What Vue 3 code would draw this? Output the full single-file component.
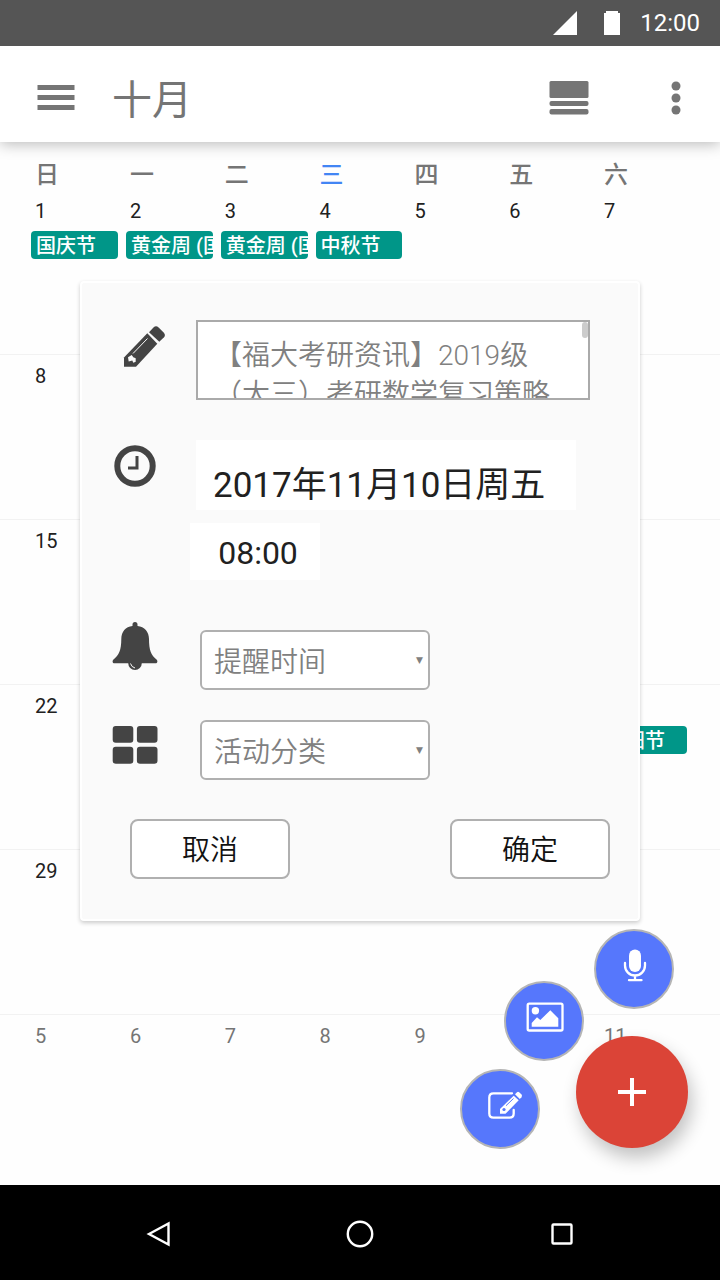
<script setup>
import { ref } from 'vue'

const weekdays = ['日', '一', '二', '三', '四', '五', '六']

const weeks = [
  [
    { day: 1, event: '国庆节' },
    { day: 2, event: '黄金周 (国' },
    { day: 3, event: '黄金周 (国' },
    { day: 4, event: '中秋节' },
    { day: 5 },
    { day: 6 },
    { day: 7 },
  ],
  [{ day: 8 }, {}, {}, {}, {}, {}, {}],
  [{ day: 15 }, {}, {}, {}, {}, {}, {}],
  [{ day: 22 }, {}, {}, {}, {}, {}, { event: '重阳节' }],
  [{ day: 29 }, {}, {}, {}, {}, {}, {}],
  [
    { day: 5, next: true },
    { day: 6, next: true },
    { day: 7, next: true },
    { day: 8, next: true },
    { day: 9, next: true },
    {},
    { day: 11, next: true },
  ],
]

const title = ref('【福大考研资讯】2019级\n（大三）考研数学复习策略')
</script>

<template>
  <div class="screen">
    <div class="status">
      <svg class="signal" viewBox="0 0 24 24" aria-hidden="true"><path d="M0 24H24V0Z" /></svg>
      <svg class="battery" viewBox="0 0 16 24" aria-hidden="true"><path d="M2 0H14V2H16V24H0V2H2Z" /></svg>
      <span class="time">12:00</span>
    </div>

    <header class="appbar">
      <button class="icon-btn" type="button" aria-label="菜单">
        <svg width="38" height="36" viewBox="0 0 38 36">
          <path d="M0.500 5H37.500V10H0.500ZM0.500 15H37.500V20H0.500ZM0.500 25H37.500V30H0.500Z" />
        </svg>
      </button>
      <h1>十月</h1>
      <button class="icon-btn view" type="button" aria-label="视图">
        <svg width="40" height="36" viewBox="0 0 40 36">
          <rect x="0.500" y="1" width="39" height="17" rx="1.500" />
          <rect x="0.500" y="21" width="39" height="5" rx="2" />
          <rect x="0.500" y="29" width="39" height="5.500" rx="2" />
        </svg>
      </button>
      <button class="icon-btn" type="button" aria-label="更多">
        <svg width="10" height="36" viewBox="0 0 10 36">
          <circle cx="5" cy="6" r="4.500" />
          <circle cx="5" cy="18" r="4.500" />
          <circle cx="5" cy="30" r="4.500" />
        </svg>
      </button>
    </header>

    <main class="content">
      <table class="month">
        <colgroup>
          <col class="first" />
          <col span="5" />
          <col class="last" />
        </colgroup>
        <thead>
          <tr>
            <th v-for="(d, i) in weekdays" :key="d" scope="col" :class="{ today: i === 3 }">{{ d }}</th>
          </tr>
        </thead>
        <tbody>
          <tr v-for="(week, w) in weeks" :key="w">
            <td v-for="(c, i) in week" :key="i">
              <div class="day" :class="{ next: c.next }">{{ c.day }}</div>
              <div v-if="c.event" class="event">{{ c.event }}</div>
            </td>
          </tr>
        </tbody>
      </table>

      <form class="dialog" @submit.prevent>
        <div class="row">
          <svg class="ico" viewBox="0 0 60 60" aria-hidden="true">
            <path d="M19 37.500L42.300 13.300L52.300 23.700L31 46.700H19Z" />
            <path d="M44 12.300L48.500 7.500Q51 5 53.600 7.400L58.600 12.400Q61 15 59 17.200L54.300 21.700Z" />
            <path class="hole" d="M23 37.300L26.700 35L28.300 37.300L30.700 38.300V41.700L28.300 42.700L27.300 40.500L23.700 41.500Z" />
            <path class="shine" d="M28 33.500L42.500 18.500" />
          </svg>
          <div class="title-box">
            <textarea v-model="title" aria-label="标题"></textarea>
            <span class="thumb"></span>
          </div>
        </div>

        <div class="row when">
          <svg class="ico" viewBox="0 0 60 60" aria-hidden="true">
            <circle class="ring" cx="30" cy="26" r="17.700" />
            <path class="hands" d="M32 16V28H23" />
          </svg>
          <div class="when-fields">
            <button class="date" type="button">2017年11月10日周五</button>
            <button class="clock" type="button">08:00</button>
          </div>
        </div>

        <div class="row remind">
          <svg class="ico" viewBox="0 0 60 60" aria-hidden="true">
            <path d="M27.500 -4V-5.500Q27.500 -8 30 -8T32.500 -5.500V-4C39.500 -3.500 44 2 44 9C44 20 46 25 51.500 29.500C53 31 52.500 33.300 50.500 33.300H9.500C7.500 33.300 7 31 8.500 29.500C14 25 16.300 20 16.300 9C16.300 2 20.500 -3.500 27.500 -4Z" />
            <path d="M23.200 33A6.800 7 0 0 0 36.800 33Z" />
            <path class="shine" d="M25.500 33.500Q26.500 37.200 30 38" />
          </svg>
          <div class="pick">
            <select aria-label="提醒时间"><option>提醒时间</option></select>
            <span class="arrow" aria-hidden="true">▼</span>
          </div>
        </div>

        <div class="row kind">
          <svg class="ico" viewBox="0 0 60 60" aria-hidden="true">
            <rect x="7.700" y="6" width="20.600" height="16.800" rx="3" />
            <rect x="31.900" y="6" width="20.600" height="16.800" rx="3" />
            <rect x="7.700" y="26.700" width="20.600" height="17" rx="3" />
            <rect x="31.900" y="26.700" width="20.600" height="17" rx="3" />
          </svg>
          <div class="pick">
            <select aria-label="活动分类"><option>活动分类</option></select>
            <span class="arrow" aria-hidden="true">▼</span>
          </div>
        </div>

        <div class="actions">
          <button type="button">取消</button>
          <button type="submit">确定</button>
        </div>
      </form>

      <button class="mini mic" type="button" aria-label="语音">
        <svg viewBox="2 2 76 76">
          <rect x="35" y="20.500" width="12" height="22.500" rx="6" />
          <path class="line" d="M31 34V36.500A10 10 0 0 0 51 36.500V34M41 46.500V51M35 51.200H47.500" />
        </svg>
      </button>
      <button class="mini photo" type="button" aria-label="图片">
        <svg viewBox="2 2 76 76">
          <rect class="line" x="23.700" y="22.700" width="34.800" height="26.800" rx="1.500" />
          <circle cx="31.400" cy="29.700" r="3.700" />
          <path d="M27.700 45.700V42L33 36.300L36.300 39L46.300 29.300L54.300 37.300V45.700Z" />
        </svg>
      </button>
      <button class="mini edit" type="button" aria-label="编辑">
        <svg viewBox="2 2 76 76">
          <path class="line" d="M52 24.300H33.500Q29.300 24.300 29.300 28.500V44.500Q29.300 48.700 33.500 48.700H49.500Q53.700 48.700 53.700 44.500V41" />
          <path d="M40 40L53.700 26.700L58.700 31.300L45.500 44.800H40Z" />
          <path d="M55 25.300L57 23.300Q58 22.300 59.200 23.300L61.500 25.600Q62.600 27 61.500 28.200L59.800 30Z" />
          <path class="cut" d="M46 36.700L53.500 29.500" />
          <circle class="dot" cx="44" cy="40.500" r="1.600" />
        </svg>
      </button>
      <button class="fab" type="button" aria-label="新建">
        <svg width="28" height="28" viewBox="0 0 28 28"><path d="M12 0H16V12H28V16H16V28H12V16H0V12H12Z" /></svg>
      </button>
    </main>

    <nav class="softkeys" aria-label="系统导航">
      <button type="button" aria-label="返回">
        <svg viewBox="0 0 48 48"><path d="M15 24L34.500 13.500V34.500Z" /></svg>
      </button>
      <button type="button" aria-label="主屏幕">
        <svg viewBox="0 0 48 48"><circle cx="24" cy="24" r="12.200" /></svg>
      </button>
      <button type="button" aria-label="最近任务">
        <svg viewBox="0 0 48 48"><rect x="14.500" y="14.500" width="19" height="19" rx="1" /></svg>
      </button>
    </nav>
  </div>
</template>

<style>
body {
  margin: 0;
}
</style>

<style scoped>
.screen {
  display: flex;
  flex-direction: column;
  min-height: 100vh;
  background: #fefefe;
  color: #212121;
  font-family: Roboto, "Noto Sans CJK SC", sans-serif;
}
.screen * {
  box-sizing: border-box;
}
button,
select,
textarea {
  margin: 0;
  padding: 0;
  border: 0;
  background: none;
  color: inherit;
  font: inherit;
}
svg {
  display: block;
}

.status {
  position: relative;
  z-index: 2;
  display: flex;
  align-items: center;
  justify-content: flex-end;
  height: 46px;
  padding-right: 20px;
  background: #555;
  color: #fff;
  fill: #fff;
}
.signal {
  width: 24px;
  height: 24px;
  margin-right: 27px;
}
.battery {
  width: 16px;
  height: 24px;
  margin-right: 20px;
}
.time {
  font-size: 24px;
  line-height: 28px;
}

.appbar {
  position: relative;
  z-index: 1;
  display: flex;
  align-items: center;
  height: 96px;
  padding: 8px 39px 0 37px;
  background: #fff;
  color: #757575;
  fill: #757575;
  box-shadow: 0 2px 14px rgba(0, 0, 0, 0.28);
}
h1 {
  flex: 1;
  margin: 0 0 0 37px;
  padding-top: 5px;
  font-size: 40px;
  font-weight: 400;
  line-height: 48px;
}
.view {
  margin-right: 82px;
}

.content {
  position: relative;
  flex: 1;
}
.month {
  width: 100%;
  table-layout: fixed;
  border-collapse: collapse;
}
.first {
  width: 126px;
}
.last {
  width: 120px;
}
th {
  height: 47px;
  padding: 20px 0 0 4px;
  color: #757575;
  font-size: 24px;
  font-weight: 500;
  line-height: 27px;
  text-align: left;
  vertical-align: top;
}
th.today {
  color: #4285f4;
}
td {
  height: 165px;
  padding: 9px 8px 0 0;
  vertical-align: top;
}
tbody tr:first-child td {
  padding-top: 10px;
}
tbody tr + tr {
  border-top: 1px solid #f2f2f2;
}
th:first-child {
  padding-left: 35px;
}
td:first-child {
  padding-left: 31px;
}
td:last-child {
  padding-right: 33px;
}
.day {
  height: 24px;
  padding-left: 4px;
  font-size: 20px;
  line-height: 24px;
}
.next {
  color: #757575;
}
.event {
  height: 28px;
  margin-top: 8px;
  padding-left: 5px;
  overflow: hidden;
  border-radius: 4px;
  background: #009688;
  color: #fff;
  font-size: 20px;
  font-weight: 500;
  line-height: 30px;
  white-space: nowrap;
}

.dialog {
  position: absolute;
  top: 139px;
  right: 80px;
  left: 80px;
  padding: 37px 28px 40px 23px;
  border: 2px solid #fff;
  border-radius: 4px;
  background: #fafafa;
  box-shadow: 0 2px 4px rgba(0, 0, 0, 0.2);
}
.row {
  display: grid;
  grid-template-columns: 60px 1fr;
  column-gap: 25px;
  align-items: start;
}
.ico {
  width: 60px;
  height: 60px;
  overflow: visible;
  fill: #444;
}
.hole {
  fill: #fafafa;
}
.shine {
  fill: none;
  stroke: #fafafa;
  stroke-width: 1;
}
.ring {
  fill: none;
  stroke: #444;
  stroke-width: 6;
}
.hands {
  fill: none;
  stroke: #444;
  stroke-width: 3;
}
.title-box {
  position: relative;
  margin: 0 20px 0 6px;
}
textarea {
  display: block;
  width: 100%;
  height: 80px;
  padding: 14px 16px 0;
  overflow: hidden;
  border: 2px solid #aaa;
  background: #fff;
  color: #808080;
  font-size: 28px;
  font-weight: 350;
  line-height: 39px;
  resize: none;
}
.thumb {
  position: absolute;
  top: 2px;
  right: 2px;
  width: 6px;
  height: 16px;
  border-radius: 3px;
  background: #ccc;
}
.when {
  margin-top: 40px;
}
.when-fields {
  display: flex;
  flex-direction: column;
  align-items: flex-start;
  gap: 13px;
}
.date {
  width: 380px;
  height: 70px;
  margin-left: 6px;
  padding: 22px 0 0 17px;
  background: #fff;
  font-size: 35px;
  line-height: 48px;
  text-align: left;
  white-space: nowrap;
}
.clock {
  width: 130px;
  height: 57px;
  padding: 2px 0 0 6px;
  background: #fff;
  font-size: 32px;
}
.remind {
  margin-top: 50px;
}
.kind {
  margin-top: 30px;
}
.pick {
  position: relative;
  width: 230px;
  margin-left: 10px;
}
select {
  display: block;
  width: 100%;
  height: 60px;
  padding: 5px 30px 0 12px;
  border: 2px solid #b0b0b0;
  border-radius: 6px;
  background: #fff;
  color: #808080;
  font-size: 28px;
  font-weight: 350;
  appearance: none;
}
.arrow {
  position: absolute;
  top: 22px;
  right: 7px;
  color: #808080;
  font-family: "DejaVu Sans", sans-serif;
  font-size: 9px;
  line-height: 16px;
  pointer-events: none;
}
.actions {
  display: flex;
  justify-content: space-between;
  margin-top: 39px;
  padding-left: 25px;
}
.actions button {
  width: 160px;
  height: 60px;
  padding-bottom: 3px;
  border: 2px solid #b0b0b0;
  border-radius: 8px;
  background: #fff;
  color: #111;
  font-size: 28px;
  font-weight: 350;
}

.mini {
  position: absolute;
  width: 80px;
  height: 80px;
  border: 2px solid #b5b5b5;
  border-radius: 50%;
  background: #5677fc;
  fill: #fff;
}
.line {
  fill: none;
  stroke: #fff;
  stroke-width: 2.300;
  stroke-linecap: round;
}
.cut {
  stroke: #5677fc;
  stroke-width: 1;
}
.dot {
  fill: #5677fc;
}
.mic {
  right: 46px;
  bottom: 176px;
}
.photo {
  right: 136px;
  bottom: 124px;
}
.edit {
  right: 180px;
  bottom: 36px;
}
.fab {
  position: absolute;
  right: 32px;
  bottom: 37px;
  display: flex;
  align-items: center;
  justify-content: center;
  width: 112px;
  height: 112px;
  border-radius: 50%;
  background: #db4437;
  fill: #fff;
  box-shadow: 4px 10px 18px rgba(0, 0, 0, 0.24);
}

.softkeys {
  display: flex;
  align-items: center;
  justify-content: center;
  gap: 154px;
  height: 95px;
  padding-top: 2px;
  background: #000;
}
.softkeys button {
  width: 48px;
  height: 48px;
}
.softkeys svg {
  fill: none;
  stroke: #fff;
  stroke-width: 2.400;
}
</style>
